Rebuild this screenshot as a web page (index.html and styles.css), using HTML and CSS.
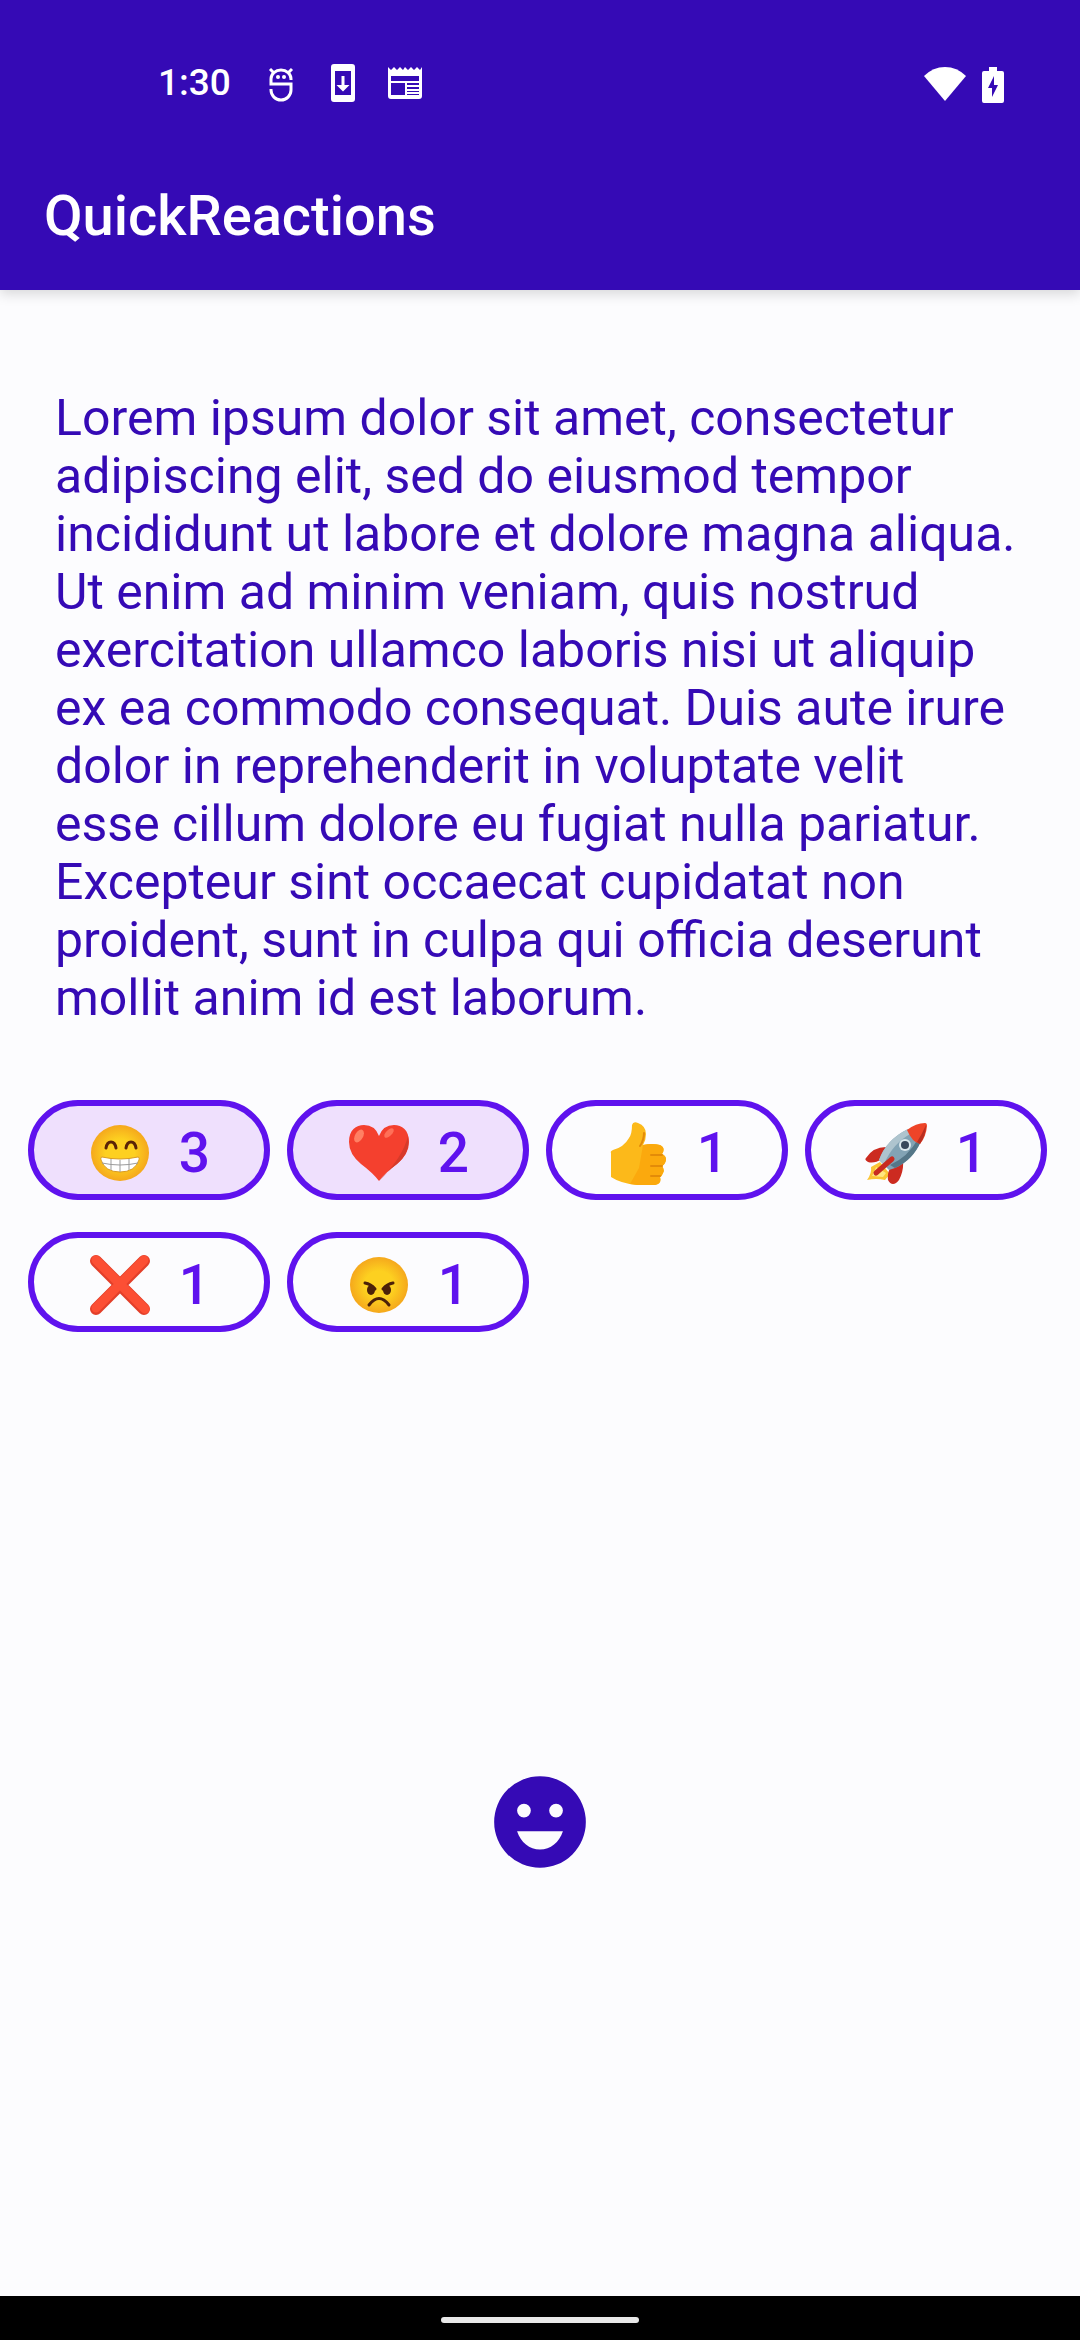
FILE: index.html
```html
<!DOCTYPE html>
<html lang="en">
<head>
<meta charset="utf-8">
<meta name="viewport" content="width=device-width, initial-scale=1">
<title>QuickReactions</title>
<link rel="stylesheet" href="styles.css">
</head>
<body>
<header class="top">
  <div class="status">
    <div class="status-left">
      <span class="clock">1:30</span>
      <svg width="36" height="40" viewBox="0 0 36 40" fill="none" stroke="currentColor" stroke-width="3">
        <path d="M28 17v-1a10 9 0 0 0-20 0v5h20v6a10 10 0 0 1-20 0v-1M11 10 7 6M25 10l4-4"/>
        <circle cx="15" cy="14" r="2" fill="currentColor" stroke="none"/><circle cx="21" cy="14" r="2" fill="currentColor" stroke="none"/>
      </svg>
      <svg width="36" height="40" viewBox="0 0 36 40" fill="currentColor">
        <path fill-rule="evenodd" d="M9 1h18a3 3 0 0 1 3 3v32a3 3 0 0 1-3 3H9a3 3 0 0 1-3-3V4a3 3 0 0 1 3-3zM10 8v24h16V8z"/>
        <path d="M16.500 13h3v9h5L18 28.500 11.500 22h5z"/>
      </svg>
      <svg width="36" height="40" viewBox="0 0 36 40" fill="currentColor">
        <path fill-rule="evenodd" d="M1 4l3 3 3-3 3 3 3-3 3 3 2-3 3 3 3-3 3 3 3-3 3 3 2-3v29a3 3 0 0 1-3 3H4a3 3 0 0 1-3-3zM4 13v5h28v-5zM4 20v12h14V20zM20 20v2h12v-2zM20 24v2h12v-2zM20 28v1h12v-1zM20 31v1h12v-1z"/>
      </svg>
    </div>
    <div class="status-right">
      <svg width="42" height="40" viewBox="0 0 42 40" fill="currentColor"><path d="M0 13Q9 4 21 4t21 9L21 38z"/></svg>
      <svg width="22" height="40" viewBox="0 0 22 40" fill="currentColor"><path fill-rule="evenodd" d="M7 4h8v4h5a2 2 0 0 1 2 2v28a2 2 0 0 1-2 2H2a2 2 0 0 1-2-2V10a2 2 0 0 1 2-2h5zM12 13 6 25h4v9l6-12h-4z"/></svg>
    </div>
  </div>
  <h1 class="title">QuickReactions</h1>
</header>
<main class="content">
  <p class="message">Lorem ipsum dolor sit amet, consectetur adipiscing elit, sed do eiusmod tempor incididunt ut labore et dolore magna aliqua. Ut enim ad minim veniam, quis nostrud exercitation ullamco laboris nisi ut aliquip ex ea commodo consequat. Duis aute irure dolor in reprehenderit in voluptate velit esse cillum dolore eu fugiat nulla pariatur. Excepteur sint occaecat cupidatat non proident, sunt in culpa qui officia deserunt mollit anim id est laborum.</p>
  <div class="reactions">
    <button class="chip selected" type="button" aria-label="Grin, 3">
      <svg class="emoji" viewBox="0 0 64 64">
        <defs><radialGradient id="face"><stop offset="0.500" stop-color="#fdd020"/><stop offset="1" stop-color="#f5a81c"/></radialGradient></defs>
        <ellipse cx="32" cy="32" rx="29" ry="28" fill="url(#face)"/>
        <path d="M18 27q1-6 5-6t5 6M38 27q1-6 5-6t5 6" fill="none" stroke="#5a2407" stroke-width="3" stroke-linecap="round"/>
        <path d="M14 36q18 4 36 0 2 0 1 3-4 12-19 12T13 39q-1-3 1-3z" fill="#fff" stroke="#d99a20"/>
        <path d="M14 42q18 4 36 0M23 38v11M32 39v12M41 38v11" fill="none" stroke="#9b9b9b" stroke-width="1"/>
      </svg><span>3</span></button>
    <button class="chip selected" type="button" aria-label="Heart, 2">
      <svg class="emoji" viewBox="0 0 64 64">
        <path d="M32 60Q26 52 14 43 2 33 2 21C2 9 9 4 17 4q11 0 15 11Q36 4 47 4c8 0 15 5 15 17q0 12-12 22Q38 52 32 60z" fill="#f4402e"/>
        <path d="M61 15q3 16-11 28-12 9-18 17 24-24 29-45z" fill="#d63a2a"/>
        <ellipse cx="12" cy="15" rx="4" ry="7" transform="rotate(30 12 15)" fill="#ff8064"/><ellipse cx="42" cy="12" rx="3" ry="6" transform="rotate(45 42 12)" fill="#ff7058"/>
      </svg><span>2</span></button>
    <button class="chip" type="button" aria-label="Thumbs up, 1">
      <svg class="emoji" viewBox="0 0 64 64">
        <path d="M5 32q-1-2 2-3 11-3 16-12 3-4 3-13 1-4 6-2 8 3 8 11 0 6-3 11 9-2 17 0 6 3 2 9 6 3 3 9-1 2-3 3 3 4 1 7-1 3-3 4 2 7-5 8Q20 66 5 56z" fill="#fcb91a"/>
        <path d="M37 24q9-2 17 0 6 3 2 9 6 3 3 9-1 2-3 3 3 4 1 7-1 3-3 4 2 7-5 8-14 1-25-1l9-16z" fill="#fba90d"/>
        <path d="M56 34H45M56 45H45M54 55h-9M38 12q0 7-4 13" fill="none" stroke="#e38b08" stroke-width="2" stroke-linecap="round"/>
      </svg><span>1</span></button>
    <button class="chip" type="button" aria-label="Rocket, 1">
      <svg class="emoji" viewBox="0 0 64 64">
        <path d="M2 59q5-7 4-13l9-5 10 12-5 6q-9-2-18 0z" fill="#fbc535"/><path d="M7 55q3-5 4-9l10 6-3 4z" fill="#ffe680"/>
        <path d="M21 26q-13 0-20 11-2 2 2 4 6 2 14-3zM38 39q1 11-4 20-3 4-6 4-3 0-5-4-1-8 3-13z" fill="#cc2b20"/>
        <path d="M14 39q7-20 29-31L56 20Q48 39 30 47l-6 2z" fill="#82a3b4"/><path d="M14 39q7-20 29-31l4 4Q28 22 19 43z" fill="#aec4ce"/><path d="M30 47Q48 39 56 20l-3-2Q43 36 25 44z" fill="#557788"/>
        <path d="M42 9q9-7 18-7 2 0 2 3-1 11-7 18-8-2-13-14z" fill="#ee4428"/><path d="M61 4q0 10-6 19l-3-2q5-8 9-17z" fill="#b92e20"/>
        <circle cx="40" cy="24" r="6" fill="#dce8ed"/><circle cx="40" cy="24" r="4" fill="#38485b"/>
        <path d="M27 38 11 52" stroke="#c82b20" stroke-width="5" stroke-linecap="round"/>
      </svg><span>1</span></button>
    <button class="chip" type="button" aria-label="Cross, 1">
      <svg class="emoji" viewBox="0 0 64 64"><path d="M8 8l48 48M56 8 8 56" stroke="#e33f2a" stroke-width="12" stroke-linecap="round"/><path d="M8 7l49 49M56 7 8 55" stroke="#fc4f34" stroke-width="9" stroke-linecap="round"/></svg><span>1</span></button>
    <button class="chip" type="button" aria-label="Angry, 1">
      <svg class="emoji" viewBox="0 0 64 64">
        <ellipse cx="32" cy="32" rx="29" ry="28" fill="url(#face)"/>
        <path d="M18 30q6 1 10 6M46 30q-6 1-10 6M22 52q10-13 20 0" fill="none" stroke="#4c2109" stroke-width="3" stroke-linecap="round"/>
        <ellipse cx="24" cy="37" rx="4" ry="5" fill="#4c2109"/><ellipse cx="40" cy="37" rx="4" ry="5" fill="#4c2109"/>
      </svg><span>1</span></button>
  </div>
  <div class="picker">
    <button class="add" type="button" aria-label="Add reaction">
      <svg width="110" height="110" viewBox="0 0 24 24" fill="currentColor"><path fill-rule="evenodd" d="M12 2a10 10 0 1 0 0 20 10 10 0 0 0 0-20zM8.500 8a1.500 1.500 0 1 1 0 3 1.500 1.500 0 0 1 0-3zM15.500 8a1.500 1.500 0 1 1 0 3 1.500 1.500 0 0 1 0-3zM7 14h10c-.8 2.400-2.700 4-5 4s-4.200-1.600-5-4z"/></svg>
    </button>
  </div>
</main>
<footer class="nav"><div class="handle"></div></footer>
</body>
</html>
```
FILE: styles.css
```css
* {
  box-sizing: border-box;
}

body {
  margin: 0;
  min-height: 100vh;
  display: flex;
  flex-direction: column;
  background: #fcfcfe;
  font-family: Roboto, sans-serif;
}

svg {
  display: block;
  flex: none;
}

.top {
  background: #350ab5;
  color: #fff;
  box-shadow: 0 4px 12px rgba(0, 0, 0, 0.15);
}

.status {
  display: flex;
  justify-content: space-between;
  align-items: center;
  height: 138px;
  padding: 28px 76px 0 158px;
}

.status-left {
  display: flex;
  align-items: center;
  gap: 26px;
}

.status-right {
  display: flex;
  gap: 16px;
}

.clock {
  margin-right: 6px;
  font-size: 37px;
  font-weight: 500;
  line-height: 40px;
}

.title {
  margin: 0;
  padding: 46px 44px 42px;
  font-size: 56px;
  line-height: 64px;
  font-weight: 500;
}

.content {
  flex: 1;
  display: flex;
  flex-direction: column;
}

.message {
  margin: 0;
  padding: 99px 60px 73px 55px;
  color: #350ab5;
  font-size: 50px;
  line-height: 58px;
}

.reactions {
  display: grid;
  grid-template-columns: repeat(4, 1fr);
  gap: 32px 17px;
  padding: 0 33px 0 28px;
}

.chip {
  display: flex;
  justify-content: center;
  align-items: center;
  gap: 27px;
  height: 100px;
  padding: 6px 0 0;
  border: 6px solid #5f12ee;
  border-radius: 50px;
  background: transparent;
  color: #5f12ee;
  font: 500 55px/64px Roboto, sans-serif;
}

.selected {
  background: #efe0fd;
}

.emoji {
  width: 64px;
  height: 64px;
}

.picker {
  flex: 1;
  display: flex;
  justify-content: center;
  align-items: center;
  padding-top: 16px;
}

.add {
  padding: 0;
  border: 0;
  background: none;
  color: #350ab5;
}

.nav {
  display: flex;
  justify-content: center;
  align-items: center;
  height: 44px;
  padding-top: 4px;
  background: #000;
}

.handle {
  width: 198px;
  height: 6px;
  border-radius: 3px;
  background: #e8e8e8;
}
```
